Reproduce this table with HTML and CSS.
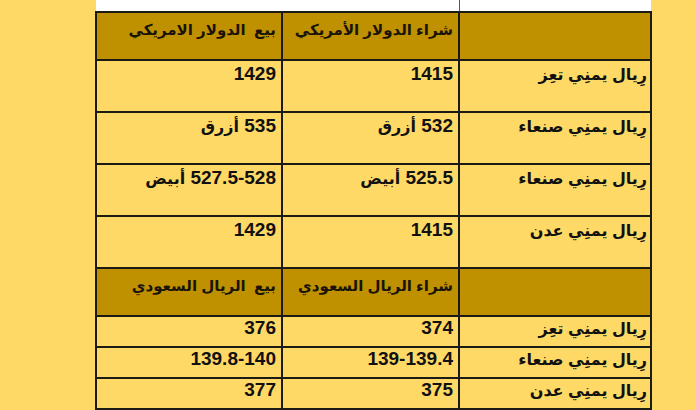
FILE: index.html
```html
<!DOCTYPE html>
<html lang="ar" dir="rtl">
<head>
<meta charset="utf-8">
<link rel="stylesheet" href="styles.css">
</head>
<body>
<div class="page">
  <table class="rates">
    <colgroup>
      <col class="c-label">
      <col class="c-buy">
      <col class="c-sell">
    </colgroup>
    <tr class="top">
      <td class="t-label"></td>
      <td></td>
      <td></td>
    </tr>
    <tr class="head">
      <td></td>
      <td>شراء الدولار الأمريكي</td>
      <td>بيع&nbsp; الدولار الامريكي</td>
    </tr>
    <tr class="tall">
      <td class="label">رِيال يمنِي تعِز</td>
      <td class="num">1415</td>
      <td class="num">1429</td>
    </tr>
    <tr class="tall">
      <td class="label">رِيال يمنِي صنعاء</td>
      <td class="num">532 <span class="word">أزرق</span></td>
      <td class="num">535 <span class="word">أزرق</span></td>
    </tr>
    <tr class="tall">
      <td class="label">رِيال يمنِي صنعاء</td>
      <td class="num">525.5 <span class="word">أبيض</span></td>
      <td class="num">527.5-528 <span class="word">أبيض</span></td>
    </tr>
    <tr class="tall">
      <td class="label">رِيال يمنِي عدن</td>
      <td class="num">1415</td>
      <td class="num">1429</td>
    </tr>
    <tr class="head">
      <td></td>
      <td>شراء الريال السعودي</td>
      <td>بيع&nbsp; الريال السعودي</td>
    </tr>
    <tr class="short">
      <td class="label">رِيال يمنِي تعِز</td>
      <td class="num">374</td>
      <td class="num">376</td>
    </tr>
    <tr class="short">
      <td class="label">رِيال يمنِي صنعاء</td>
      <td class="num">139-139.4</td>
      <td class="num">139.8-140</td>
    </tr>
    <tr class="short">
      <td class="label">رِيال يمنِي عدن</td>
      <td class="num">375</td>
      <td class="num">377</td>
    </tr>
  </table>
</div>
</body>
</html>
```

FILE: styles.css
```css
html, body {
  margin: 0;
  padding: 0;
}
body {
  background: #ffd966;
  width: 696px;
  height: 410px;
  overflow: hidden;
  font-family: "Liberation Sans", "DejaVu Sans", sans-serif;
  color: #111;
}
.page {
  padding-right: 44px;
}
.rates {
  border-collapse: collapse;
  table-layout: fixed;
  width: 555px;
}
.c-label { width: 192px; }
.c-buy { width: 177px; }
.c-sell { width: 186px; }

.rates td {
  border: 2px solid #1c1a14;
  background: #ffd966;
  text-align: right;
  vertical-align: top;
  padding: 2px 5px 0 5px;
  white-space: nowrap;
  overflow: hidden;
}
.rates tr.top td {
  background: #ffffff;
  border: none;
  height: 11px;
  padding: 0;
}
.rates tr.top td.t-label {
  border-left: 1px solid #555;
}
.rates tr.head td {
  background: #bf9000;
  height: 38px;
  font-size: 15px;
  padding-top: 8px;
  font-weight: bold;
  color: #1a1408;
}
.rates tr.tall td {
  height: 48px;
}
.rates tr.tall td.label {
  height: 46px;
}
.rates tr.short td {
  height: 27px;
  padding-top: 0;
}
.rates tr.short td.label {
  height: 27px;
}
.num {
  font-size: 19px;
  font-weight: bold;
}
.word {
  font-size: 16px;
}
.label {
  font-size: 16px;
  font-weight: bold;
  padding-top: 4px !important;
  padding-right: 3px !important;
}
.rates tr.short .label {
  padding-top: 2px !important;
}
```
